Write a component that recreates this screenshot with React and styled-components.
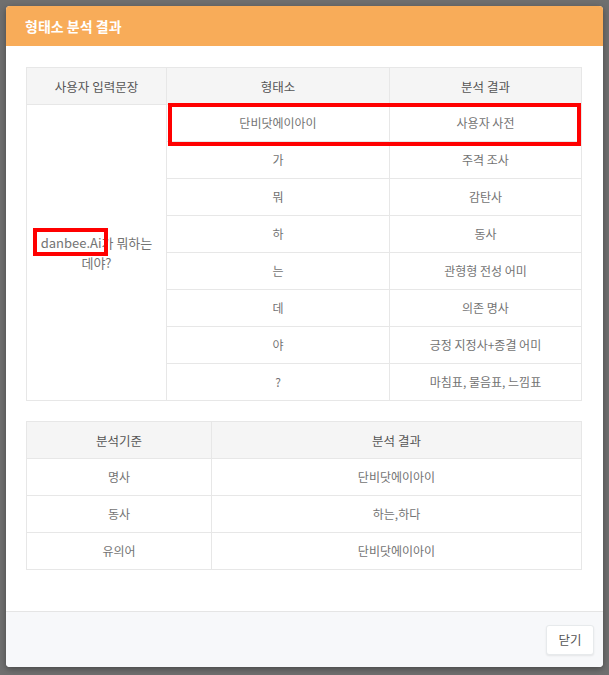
import React from 'react';
import styled, { createGlobalStyle } from 'styled-components';

const GlobalStyle = createGlobalStyle`
    html, body {
        margin:0;
        padding:0;
    }
    body {
        font-family:"Noto Sans CJK KR", "Noto Sans", sans-serif;
        background:#6f6f6f;
    }
`;

const Backdrop = styled.div`
    width:609px;
    height:675px;
    box-sizing:border-box;
    padding:6px 6px 0 6px;
    background:#6f6f6f;
`;

const Modal = styled.div`
    width:597px;
    height:661px;
    background:#fff;
    border-radius:4px;
    overflow:hidden;
    display:flex;
    flex-direction:column;
    box-shadow:0 2px 6px rgba(0,0,0,0.35);
`;

const ModalHeader = styled.div`
    height:40px;
    flex-shrink:0;
    background:#f8ac59;
    color:#fff;
    font-size:14px;
    font-weight:700;
    display:flex;
    align-items:center;
    padding-left:19px;
`;

const ModalBody = styled.div`
    flex:1;
    padding:21px 21px 0 20px;
`;

const TableWrap = styled.div`
    position:relative;
    margin-bottom:20px;
`;

const Table = styled.table`
    width:100%;
    border-collapse:collapse;
    table-layout:fixed;
    font-size:12px;
    color:#737373;
    text-align:center;
`;

const Th = styled.th`
    box-sizing:border-box;
    height:37px;
    padding:0 8px;
    background:#f5f5f5;
    border:1px solid #e7e7e7;
    font-weight:400;
    font-size:12.5px;
    color:#555;
    width:${props => props.w ? props.w + 'px' : 'auto'};
`;

const Td = styled.td`
    box-sizing:border-box;
    height:37px;
    padding:0 8px;
    border:1px solid #e7e7e7;
    vertical-align:middle;
    line-height:20px;
`;

const SentenceCell = styled(Td)`
    padding:0 11px;
    font-size:13px;
`;

const Marked = styled.span`
    position:relative;
    &::after {
        content:"";
        position:absolute;
        left:-8px;
        right:-6px;
        top:-5px;
        bottom:-4px;
        border:4px solid #ff0000;
    }
`;

const RowHighlight = styled.div`
    position:absolute;
    left:142px;
    top:36px;
    width:413px;
    height:43px;
    box-sizing:border-box;
    border:4px solid #ff0000;
    pointer-events:none;
`;

const ModalFooter = styled.div`
    height:56px;
    flex-shrink:0;
    box-sizing:border-box;
    border-top:1px solid #e5e5e5;
    background:#f7f8fa;
    display:flex;
    align-items:center;
    justify-content:flex-end;
    padding-right:9px;
`;

const CloseButton = styled.button`
    width:48px;
    height:30px;
    background:#fff;
    border:1px solid #e7eaec;
    border-radius:3px;
    font-family:inherit;
    font-size:12.5px;
    color:#555;
    box-shadow:0 1px 2px rgba(0,0,0,0.08);
    cursor:pointer;
`;

const morphemes = [
    ['단비닷에이아이', '사용자 사전'],
    ['가', '주격 조사'],
    ['뭐', '감탄사'],
    ['하', '동사'],
    ['는', '관형형 전성 어미'],
    ['데', '의존 명사'],
    ['야', '긍정 지정사+종결 어미'],
    ['?', '마침표, 물음표, 느낌표'],
];

const summary = [
    ['명사', '단비닷에이아이'],
    ['동사', '하는,하다'],
    ['유의어', '단비닷에이아이'],
];

const App = () => {
    return (
        <>
            <GlobalStyle />
            <Backdrop>
                <Modal>
                    <ModalHeader>형태소 분석 결과</ModalHeader>
                    <ModalBody>
                        <TableWrap>
                            <Table>
                                <thead>
                                    <tr>
                                        <Th w={140}>사용자 입력문장</Th>
                                        <Th w={223}>형태소</Th>
                                        <Th>분석 결과</Th>
                                    </tr>
                                </thead>
                                <tbody>
                                    {morphemes.map((m, i) => (
                                        <tr key={i}>
                                            {i === 0 && (
                                                <SentenceCell rowSpan={morphemes.length}>
                                                    <Marked>danbee.Ai</Marked>가 뭐하는 데야?
                                                </SentenceCell>
                                            )}
                                            <Td>{m[0]}</Td>
                                            <Td>{m[1]}</Td>
                                        </tr>
                                    ))}
                                </tbody>
                            </Table>
                            <RowHighlight />
                        </TableWrap>
                        <TableWrap>
                            <Table>
                                <thead>
                                    <tr>
                                        <Th w={185}>분석기준</Th>
                                        <Th>분석 결과</Th>
                                    </tr>
                                </thead>
                                <tbody>
                                    {summary.map((s, i) => (
                                        <tr key={i}>
                                            <Td>{s[0]}</Td>
                                            <Td>{s[1]}</Td>
                                        </tr>
                                    ))}
                                </tbody>
                            </Table>
                        </TableWrap>
                    </ModalBody>
                    <ModalFooter>
                        <CloseButton>닫기</CloseButton>
                    </ModalFooter>
                </Modal>
            </Backdrop>
        </>
    );
};

export default App;
